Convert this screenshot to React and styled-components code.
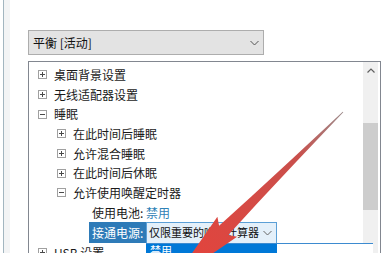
import React from 'react';
import styled, { createGlobalStyle } from 'styled-components';

const GlobalStyle = createGlobalStyle`
  html, body {
    margin: 0;
    padding: 0;
    background: #fff;
    overflow: hidden;
  }
  body {
    font-family: "Noto Sans CJK SC", "Noto Sans", sans-serif;
    color: #1a1a1a;
  }
`;

const Frame = styled.div`
  position: relative;
  display: flex;
  width: 387px;
  height: 253px;
  overflow: hidden;
`;

const Edge = styled.div`
  margin-left: 3px;
  width: 6px;
  border-left: 1px solid #a3b6c0;
  background: #f3f4f5;
`;

const Main = styled.div`
  flex: 1;
  padding: 30px 6px 0 18px;
  display: flex;
  flex-direction: column;
`;

const Combo = styled.div`
  box-sizing: border-box;
  width: 236px;
  height: 25px;
  border: 1px solid #adadad;
  background: #e3e3e3;
  display: flex;
  align-items: center;
  justify-content: space-between;
  padding: 0 4px 0 4px;
  font-size: 12px;
  line-height: 23px;
  color: #111;
`;

const Tree = styled.div`
  margin-top: 6px;
  height: 300px;
  border: 1px solid #828790;
  display: flex;
  background: #fff;
`;

const List = styled.div`
  flex: 1;
  padding-top: 3px;
`;

const Row = styled.div`
  height: ${({ $h }) => $h || 19.7}px;
  display: flex;
  align-items: center;
  padding-left: ${({ $level }) => 9 + $level * 19}px;
  font-size: 12px;
  line-height: 19.7px;
  white-space: nowrap;
`;

const Spacer = styled.span`
  width: 16px;
  flex: none;
`;

const Value = styled.span`
  color: #2f82b6;
`;

const Highlight = styled.span`
  box-sizing: border-box;
  width: 57px;
  height: 21px;
  margin-left: -3px;
  padding-left: 3px;
  background: #2e7bb8;
  color: #fff;
  line-height: 21px;
`;

const Select = styled.div`
  position: relative;
  box-sizing: border-box;
  width: 131px;
  height: 22px;
  border: 1px solid #5b9fd6;
  background: #e4f0fa;
  display: flex;
  align-items: center;
  justify-content: space-between;
  padding: 0 4px 0 2px;
  font-size: 11px;
  color: #111;
`;

const Popup = styled.div`
  position: absolute;
  top: 100%;
  left: -1px;
  width: 227px;
  height: 14px;
  border-top: 1px solid #3d8bd0;
  background: #fff;
`;

const PopupItem = styled.div`
  width: 131px;
  height: 100%;
  background: #0078d7;
  color: #fff;
  font-size: 11px;
  line-height: 13px;
  padding-left: 4px;
  box-sizing: border-box;
`;

const Scrollbar = styled.div`
  width: 15px;
  margin-right: 2px;
  background: #f0f0f0;
  display: flex;
  flex-direction: column;
  align-items: stretch;
`;

const ScrollButton = styled.div`
  height: 17px;
  display: flex;
  align-items: center;
  justify-content: center;
`;

const Thumb = styled.div`
  margin-top: 44px;
  height: 87px;
  background: #cdcdcd;
`;

const Overlay = styled.svg`
  position: absolute;
  left: 0;
  top: 0;
  pointer-events: none;
`;

const Expander = ({ open }) => (
  <svg width="9" height="9" style={{ marginRight: 7, flex: 'none' }}>
    <rect x="0.5" y="0.5" width="8" height="8" fill="#fff" stroke="#a0a0a0" />
    <path d="M2 4.5h5" stroke="#4a4a4a" />
    {!open && <path d="M4.5 2v5" stroke="#4a4a4a" />}
  </svg>
);

const Chevron = ({ color = '#555' }) => (
  <svg width="9" height="6" viewBox="0 0 9 6">
    <path d="M0.5 1l4 4 4-4" fill="none" stroke={color} strokeWidth="1" />
  </svg>
);

const rows = [
  { level: 0, open: false, label: '桌面背景设置' },
  { level: 0, open: false, label: '无线适配器设置' },
  { level: 0, open: true, label: '睡眠' },
  { level: 1, open: false, label: '在此时间后睡眠' },
  { level: 1, open: false, label: '允许混合睡眠' },
  { level: 1, open: false, label: '在此时间后休眠' },
  { level: 1, open: true, label: '允许使用唤醒定时器' },
];

// red annotation arrow, computed along its axis
const tail = [343, 112];
const u = [-0.71, 0.704];
const n = [0.704, 0.71];
const pt = (s, h) =>
  `${(tail[0] + s * u[0] + h * n[0]).toFixed(1)},${(tail[1] + s * u[1] + h * n[1]).toFixed(1)}`;
const arrowPoints = [
  pt(0, 0.4), pt(70, 2.5), pt(125, 4.5), pt(168, 6.5), pt(163, 14), pt(240, 0),
  pt(163, -14), pt(168, -6.5), pt(125, -4.5), pt(70, -2.5), pt(0, -0.4),
].join(' ');

export default function App() {
  return (
    <>
      <GlobalStyle />
      <Frame>
        <Edge />
        <Main>
          <Combo>
            <span>平衡 [活动]</span>
            <Chevron />
          </Combo>
          <Tree>
            <List>
              {rows.map((r) => (
                <Row key={r.label} $level={r.level}>
                  <Expander open={r.open} />
                  {r.label}
                </Row>
              ))}
              <Row $level={2}>
                <Spacer />
                使用电池:&nbsp;<Value>禁用</Value>
              </Row>
              <Row $level={2} $h={20}>
                <Spacer />
                <Highlight>接通电源:</Highlight>
                <Select>
                  <span>仅限重要的唤醒计算器</span>
                  <Chevron color="#666" />
                  <Popup>
                    <PopupItem>禁用</PopupItem>
                  </Popup>
                </Select>
              </Row>
              <Row $level={0}>
                <Expander open={false} />
                USB 设置
              </Row>
            </List>
            <Scrollbar>
              <ScrollButton>
                <svg width="8" height="5" viewBox="0 0 8 5">
                  <path d="M0.5 4.5l3.5-3.5 3.5 3.5" fill="none" stroke="#606060" strokeWidth="1.2" />
                </svg>
              </ScrollButton>
              <Thumb />
            </Scrollbar>
          </Tree>
        </Main>
        <Overlay width="387" height="253" viewBox="0 0 387 253">
          <defs>
            <linearGradient id="arrowFill" x1="343" y1="112" x2="190" y2="253" gradientUnits="userSpaceOnUse">
              <stop offset="0" stopColor="#9c8a8a" />
              <stop offset="0.3" stopColor="#c9504c" />
              <stop offset="1" stopColor="#e2443d" />
            </linearGradient>
          </defs>
          <polygon points={arrowPoints} fill="url(#arrowFill)" />
        </Overlay>
      </Frame>
    </>
  );
}
